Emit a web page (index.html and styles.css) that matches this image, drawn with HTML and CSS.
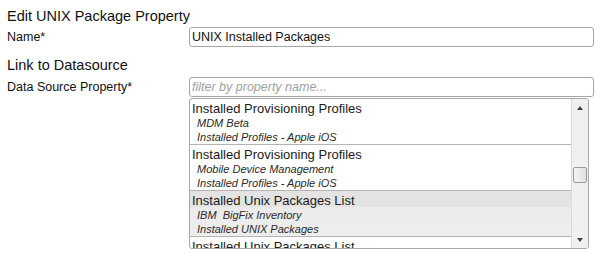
FILE: index.html
```html
<!DOCTYPE html>
<html>
<head>
<meta charset="utf-8">
<link rel="stylesheet" href="styles.css">
</head>
<body>
<div class="page">
  <h2 class="section-title">Edit UNIX Package Property</h2>
  <div class="form-row">
    <label class="field-label">Name*</label>
    <div class="field"><input class="text-input" type="text" value="UNIX Installed Packages"></div>
  </div>
  <h2 class="section-title second">Link to Datasource</h2>
  <div class="form-row">
    <label class="field-label">Data Source Property*</label>
    <div class="field"><input class="text-input filter" type="text" placeholder="filter by property name..."></div>
  </div>
  <div class="form-row list-row">
    <div class="label-spacer"></div>
    <div class="listbox">
      <div class="list-items">
        <div class="list-item">
          <div class="item-title">Installed Provisioning Profiles</div>
          <div class="item-sub">MDM Beta</div>
          <div class="item-sub">Installed Profiles - Apple iOS</div>
        </div>
        <div class="list-item">
          <div class="item-title">Installed Provisioning Profiles</div>
          <div class="item-sub">Mobile Device Management</div>
          <div class="item-sub">Installed Profiles - Apple iOS</div>
        </div>
        <div class="list-item selected">
          <div class="item-title">Installed Unix Packages List</div>
          <div class="item-sub">IBM &nbsp;BigFix Inventory</div>
          <div class="item-sub">Installed UNIX Packages</div>
        </div>
        <div class="list-item">
          <div class="item-title">Installed Unix Packages List</div>
          <div class="item-sub">IBM BigFix Inventory</div>
          <div class="item-sub">Installed UNIX Packages</div>
        </div>
      </div>
      <div class="scrollbar">
        <div class="sb-btn"><span class="arrow up"></span></div>
        <div class="sb-track">
          <div class="sb-thumb"></div>
        </div>
        <div class="sb-btn"><span class="arrow down"></span></div>
      </div>
    </div>
  </div>
</div>
</body>
</html>
```

FILE: styles.css
```css
* { box-sizing: border-box; }
html, body {
  margin: 0;
  padding: 0;
  background: #ffffff;
}
body {
  font-family: "Liberation Sans", Arial, sans-serif;
  color: #1a1a1a;
}
.page {
  padding: 7px 12px 0 7px;
}
.section-title {
  margin: 0;
  font-size: 14.5px;
  line-height: 18px;
  font-weight: normal;
  color: #111;
}
.section-title.second {
  margin-top: 9px;
}
.form-row {
  display: flex;
  align-items: center;
  margin-top: 2px;
}
.field-label {
  width: 182px;
  flex: none;
  font-size: 12.5px;
  color: #111;
}
.label-spacer {
  width: 182px;
  flex: none;
}
.field {
  flex: 1;
}
.text-input {
  display: block;
  width: 100%;
  height: 20px;
  margin: 0;
  padding: 0 2px;
  border: 1px solid #a6a6a6;
  border-radius: 3px;
  font-family: "Liberation Sans", Arial, sans-serif;
  font-size: 12.5px;
  color: #111;
  background: #fff;
  outline: none;
}
.text-input.filter {
  margin-top: 1px;
}
.text-input::placeholder {
  color: #a0a0a0;
  font-style: italic;
}
.list-row {
  margin-top: 1px;
  align-items: stretch;
}
.listbox {
  width: 400px;
  height: 151px;
  display: flex;
  border: 1px solid #a8a8a8;
  border-radius: 3px;
  overflow: hidden;
  background: #fff;
}
.list-items {
  flex: 1;
  overflow: hidden;
}
.list-item {
  height: 46px;
  padding: 2px 0 0 2px;
  border-bottom: 1px solid #b4b4b4;
}
.list-item.selected {
  background: linear-gradient(to bottom, #e3e3e3 0%, #e3e3e3 35%, #ebebeb 36%, #eeeeee 100%);
}
.item-title {
  font-size: 13px;
  line-height: 15px;
  color: #1a1a1a;
}
.item-sub {
  font-size: 11px;
  line-height: 14px;
  font-style: italic;
  color: #2a2a2a;
  padding-left: 5px;
}
.scrollbar {
  width: 17px;
  flex: none;
  display: flex;
  flex-direction: column;
  background: #f0f0f0;
  border-left: 1px solid #dadada;
}
.sb-btn {
  height: 17px;
  display: flex;
  align-items: center;
  justify-content: center;
  flex: none;
}
.arrow {
  width: 0;
  height: 0;
  border-left: 3.5px solid transparent;
  border-right: 3.5px solid transparent;
}
.arrow.up {
  border-bottom: 4px solid #404040;
}
.arrow.down {
  border-top: 4px solid #404040;
}
.sb-track {
  flex: 1;
  padding: 51px 1px 0 1px;
}
.sb-thumb {
  height: 16px;
  border: 1px solid #9a9a9a;
  border-radius: 2px;
  background: linear-gradient(to right, #f4f4f4, #e2e2e2);
}
```
